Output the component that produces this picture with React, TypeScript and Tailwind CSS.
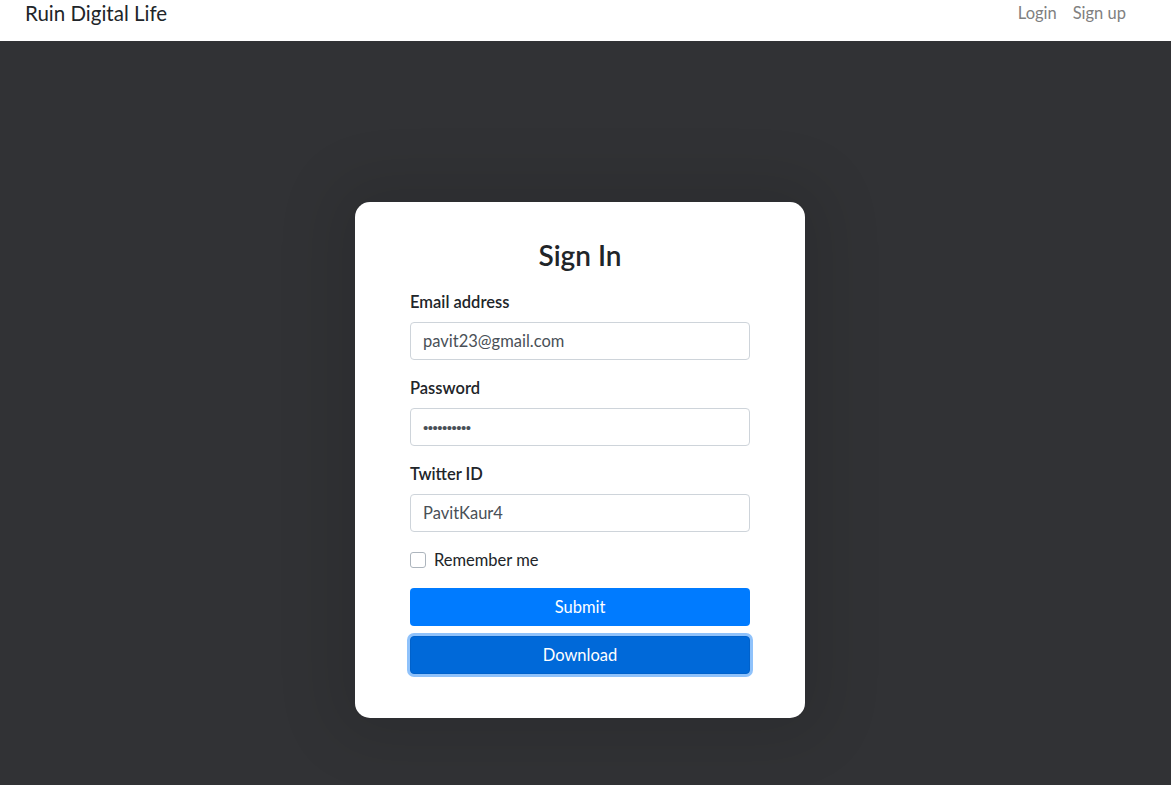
import { useState } from "react";

const font = { fontFamily: "Lato, 'Open Sans', sans-serif" };

const Field = ({
  label,
  type,
  value,
}: {
  label: string;
  type: string;
  value: string;
}) => (
  <div className="mb-4">
    <label className="block mb-2 text-[16.5px] leading-6 font-semibold text-[#212529]">
      {label}
    </label>
    <input
      type={type}
      defaultValue={value}
      className={
        type === "password"
          ? "block w-full h-[38px] px-[12px] text-[15px] tracking-[-0.5px] font-['Liberation_Sans',sans-serif] text-[#495057] bg-white border border-[#ced4da] rounded-[4px] outline-none"
          : "block w-full h-[38px] px-[12px] text-[16.5px] text-[#495057] bg-white border border-[#ced4da] rounded-[4px] outline-none"
      }
    />
  </div>
);

const App = () => {
  const [remember, setRemember] = useState(false);

  return (
    <div className="min-h-screen w-full bg-[#313235]" style={font}>
      <nav className="h-[41px] bg-white flex items-start justify-between pl-[25px] pr-[45px]">
        <span className="text-[20.5px] leading-6 mt-[1px] text-[#212529]">
          Ruin Digital Life
        </span>
        <div className="flex gap-4 text-[16.5px] leading-6 mt-[1px] text-[#808080]">
          <a href="#">Login</a>
          <a href="#">Sign up</a>
        </div>
      </nav>

      <main className="flex justify-center pt-[161px] pb-[67px] pr-[11px]">
        <div className="w-[450px] bg-white rounded-[15px] px-[55px] pt-[36px] pb-[44px] shadow-[0_0_60px_22px_rgba(0,0,0,0.1)]">
          <h1 className="text-center text-[28px] leading-[34px] font-semibold text-[#212529] mb-[18px]">
            Sign In
          </h1>
          <form onSubmit={(e) => e.preventDefault()}>
            <Field label="Email address" type="email" value="pavit23@gmail.com" />
            <Field label="Password" type="password" value="1234567890" />
            <Field label="Twitter ID" type="text" value="PavitKaur4" />
            <label className="flex items-center gap-2 h-6 mb-4 text-[16.5px] text-[#212529]">
              <input
                type="checkbox"
                checked={remember}
                onChange={(e) => setRemember(e.target.checked)}
                className="appearance-none w-4 h-4 border border-[#adb5bd] rounded-[3px] bg-white"
              />
              <span>Remember me</span>
            </label>
            <button
              type="submit"
              className="block w-full h-[38px] rounded-[4px] bg-[#007bff] text-white text-[16.5px]"
            >
              Submit
            </button>
            <button
              type="button"
              className="block w-full h-[38px] mt-[10px] rounded-[4px] bg-[#0069d9] border border-[#0062cc] text-white text-[16.5px] ring-[3px] ring-[#8fc2fb]"
            >
              Download
            </button>
          </form>
        </div>
      </main>
    </div>
  );
};

export default App;
